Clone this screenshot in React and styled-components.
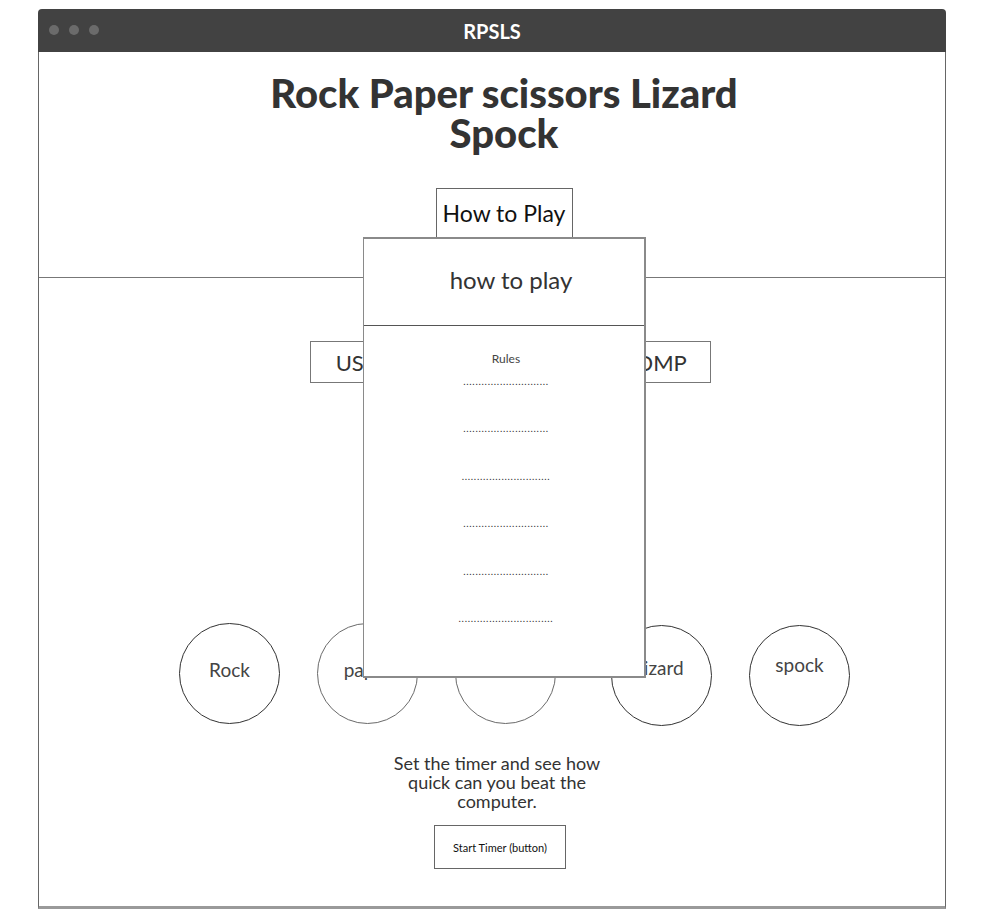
import React from 'react';
import styled, { createGlobalStyle } from 'styled-components';

const CHOICES = [
    { label: 'Rock', tone: '#333', extra: 0, drop: 0, lift: 8 },
    { label: 'paper', tone: '#6a6a6a', extra: 0, drop: 0, lift: 8 },
    { label: 'scissors', tone: '#6a6a6a', extra: 0, drop: 0, lift: 8 },
    { label: 'lizard', tone: '#333', extra: 18, drop: 2, lift: 16 },
    { label: 'spock', tone: '#333', extra: 0, drop: 2, lift: 22 },
];

const RULE_DOTS = [28, 28, 29, 28, 28, 31];

const GlobalStyle = createGlobalStyle`
    body {
        margin: 0;
        background: #fff;
        font-family: Lato, "Liberation Sans", sans-serif;
        color: #333;
    }
`;

const Page = styled.div`
    padding: 9px 0 0 38px;
`;

const Window = styled.div`
    width: 908px;
`;

const TitleBar = styled.div`
    position: relative;
    display: flex;
    align-items: center;
    justify-content: center;
    height: 43px;
    background-color: #424242;
    border-radius: 4px 4px 0 0;
    color: #fff;
    font-size: 20px;
    font-weight: 700;
`;

const Dots = styled.div`
    position: absolute;
    left: 11px;
    top: 16px;
    display: flex;
    gap: 10px;
`;

const Dot = styled.span`
    width: 10px;
    height: 10px;
    border-radius: 50%;
    background-color: #6b6b6b;
`;

const WindowBody = styled.div`
    position: relative;
    border: 1px solid #666;
    border-top: none;
    border-bottom: 3px solid #9a9a9a;
`;

const HeaderSection = styled.div`
    display: flex;
    flex-direction: column;
    align-items: center;
    padding: 21px 0 0 24px;
    height: 204px;
    border-bottom: 1px solid #777;
`;

const Title = styled.h1`
    margin: 0;
    width: 540px;
    text-align: center;
    font-size: 40px;
    line-height: 40px;
    font-weight: 900;
    color: #333;
`;

const HowToButton = styled.div`
    margin-top: 35px;
    width: 135px;
    height: 48px;
    border: 1px solid #666;
    display: flex;
    align-items: center;
    justify-content: center;
    font-size: 23px;
    color: #111;
`;

const GameSection = styled.div`
    display: flex;
    flex-direction: column;
    padding: 63px 0 37px;
`;

const PlayersRow = styled.div`
    display: flex;
    justify-content: space-between;
    width: 401px;
    margin-left: 271px;
`;

const PlayerBox = styled.div`
    width: 104px;
    height: 40px;
    border: 1px solid #777;
    display: flex;
    align-items: center;
    justify-content: center;
    padding-right: 4px;
    box-sizing: content-box;
    font-size: 22px;
    color: #333;
`;

const ChoicesRow = styled.div`
    display: flex;
    align-items: flex-start;
    gap: 37px;
    margin: 240px 0 0 140px;
    height: 103px;
`;

const Choice = styled.div`
    width: 101px;
    height: 101px;
    margin-left: ${props => props.$extra}px;
    margin-top: ${props => props.$drop}px;
    border: 1px solid ${props => props.$tone};
    border-radius: 50%;
    display: flex;
    align-items: center;
    justify-content: center;
    padding-bottom: ${props => props.$lift}px;
    box-sizing: border-box;
    font-size: 19px;
    color: #444;
`;

const Blurb = styled.p`
    margin: 28px 0 0 10px;
    align-self: center;
    width: 220px;
    text-align: center;
    font-size: 18px;
    line-height: 19px;
    color: #333;
`;

const TimerButton = styled.div`
    align-self: center;
    margin: 14px 0 0 16px;
    width: 130px;
    height: 42px;
    border: 1px solid #666;
    display: flex;
    align-items: center;
    justify-content: center;
    font-size: 11px;
    color: #111;
`;

const Modal = styled.div`
    position: absolute;
    top: 185px;
    left: 324px;
    width: 280px;
    height: 437px;
    background: #fff;
    border: 2px solid #8a8a8a;
    border-left-width: 1px;
    display: flex;
    flex-direction: column;
`;

const ModalHeader = styled.div`
    height: 87px;
    border-bottom: 1px solid #555;
    display: flex;
    align-items: center;
    justify-content: center;
    padding: 0 0 6px 14px;
    box-sizing: border-box;
    font-size: 24px;
    color: #333;
`;

const ModalBody = styled.div`
    display: flex;
    flex-direction: column;
    align-items: center;
    padding: 25px 0 0 4px;
`;

const RulesLabel = styled.div`
    font-size: 12px;
    line-height: 16px;
    color: #444;
`;

const RuleLine = styled.div`
    margin-top: ${props => (props.$first ? 8 : 35.4)}px;
    height: 12px;
    line-height: 12px;
    font-size: 10px;
    letter-spacing: 0.7px;
    color: #333;
`;

class App extends React.Component {
    render() {
        return (
            <Page>
                <GlobalStyle />
                <Window>
                    <TitleBar>
                        <Dots>
                            <Dot />
                            <Dot />
                            <Dot />
                        </Dots>
                        RPSLS
                    </TitleBar>
                    <WindowBody>
                        <HeaderSection>
                            <Title>Rock Paper scissors Lizard Spock</Title>
                            <HowToButton>How to Play</HowToButton>
                        </HeaderSection>
                        <GameSection>
                            <PlayersRow>
                                <PlayerBox>USER</PlayerBox>
                                <PlayerBox>COMP</PlayerBox>
                            </PlayersRow>
                            <ChoicesRow>
                                {CHOICES.map(choice => (
                                    <Choice
                                        key={choice.label}
                                        $tone={choice.tone}
                                        $extra={choice.extra}
                                        $drop={choice.drop}
                                        $lift={choice.lift}
                                    >
                                        {choice.label}
                                    </Choice>
                                ))}
                            </ChoicesRow>
                            <Blurb>Set the timer and see how quick can you beat the computer.</Blurb>
                            <TimerButton>Start Timer (button)</TimerButton>
                        </GameSection>
                        <Modal>
                            <ModalHeader>how to play</ModalHeader>
                            <ModalBody>
                                <RulesLabel>Rules</RulesLabel>
                                {RULE_DOTS.map((count, i) => (
                                    <RuleLine key={i} $first={i === 0}>
                                        {'.'.repeat(count)}
                                    </RuleLine>
                                ))}
                            </ModalBody>
                        </Modal>
                    </WindowBody>
                </Window>
            </Page>
        );
    }
}

export default App;
